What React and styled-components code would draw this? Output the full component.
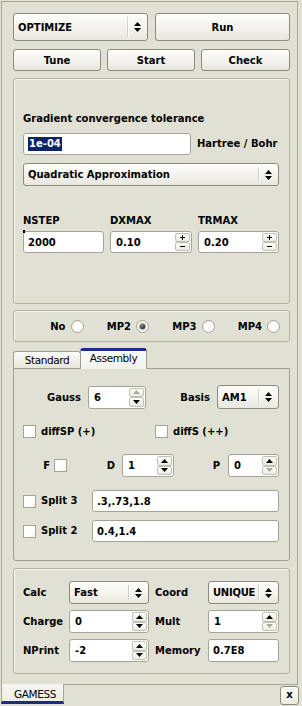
import React from 'react';
import styled, { createGlobalStyle } from 'styled-components';

const GlobalStyle = createGlobalStyle`
  html, body {
    margin: 0;
    padding: 0;
    background: #e1e0d4;
  }
  body {
    font-family: "DejaVu Sans", sans-serif;
    font-size: 10px;
    font-weight: bold;
    color: #000;
  }
`;

const Window = styled.div`
  width: 301px;
  height: 705px;
  margin: 1px 0 0 1px;
  display: flex;
  flex-direction: column;
`;

const Frame = styled.div`
  box-sizing: border-box;
  width: 297px;
  height: 683px;
  border: 1px solid #a9a697;
  border-bottom: none;
  padding: 11px 7px 0 11px;
  display: flex;
  flex-direction: column;
`;

const Row = styled.div`
  display: grid;
  grid-template-columns: ${p => p.$cols};
  column-gap: ${p => p.$gap || 0}px;
  margin-top: ${p => p.$mt || 0}px;
  height: ${p => p.$h}px;
  align-items: center;
`;

const Button = styled.div`
  box-sizing: border-box;
  height: 100%;
  border: 1px solid #8c8a7c;
  border-radius: 3px;
  background: linear-gradient(#fdfdfb, #f3f2ec 55%, #e7e5db);
  display: flex;
  align-items: center;
  justify-content: center;
`;

const Combo = styled.div`
  box-sizing: border-box;
  height: ${p => p.$h || 23}px;
  border: 1px solid #8c8a7c;
  border-radius: 3px;
  background: linear-gradient(#fdfdfb, #f3f2ec 55%, #e9e7de);
  display: flex;
  align-items: center;
  padding-left: 4px;
`;

const ComboText = styled.span`
  flex: 1;
  min-width: 0;
  white-space: nowrap;
  letter-spacing: ${p => p.$tight ? '-0.25px' : 'normal'};
`;

const ComboArrow = styled.span`
  flex: none;
  width: 19px;
  height: calc(100% - 6px);
  border-left: 1px solid #d2d0c4;
  box-shadow: inset 1px 0 0 #fff;
  display: flex;
  align-items: center;
  justify-content: center;
`;

const Group = styled.div`
  box-sizing: border-box;
  height: ${p => p.$h}px;
  margin-top: ${p => p.$mt}px;
  border: 1px solid #b3b0a2;
  border-radius: 3px;
  box-shadow: inset 1px 1px 0 #f4f3ee;
  padding: ${p => p.$pad};
  display: flex;
  flex-direction: column;
`;

const Label = styled.div`
  line-height: 12px;
  white-space: nowrap;
  margin-top: ${p => p.$mt || 0}px;
  padding-left: ${p => p.$pl || 0}px;
  width: ${p => (p.$w ? p.$w + 'px' : 'auto')};
  flex: none;
`;

const Field = styled.div`
  box-sizing: border-box;
  position: relative;
  height: ${p => p.$h || 22}px;
  width: ${p => (p.$w ? p.$w + 'px' : 'auto')};
  flex: ${p => (p.$w ? 'none' : '1')};
  border: 1px solid #a5a394;
  border-radius: 3px;
  background: #fff;
  display: flex;
  align-items: center;
  padding: 0 4px;
  white-space: nowrap;
`;

const Caret = styled.span`
  position: absolute;
  left: -1px;
  top: -2px;
  width: 2px;
  height: 3px;
  background: #000;
`;

const Selected = styled.span`
  background: #0a246a;
  color: #fff;
  line-height: 14px;
  padding: 0 1px;
`;

const Inline = styled.div`
  display: flex;
  align-items: center;
  gap: ${p => p.$gap || 6}px;
  margin-top: ${p => p.$mt || 0}px;
  justify-content: ${p => p.$justify || 'flex-start'};
`;

const Spin = styled.div`
  box-sizing: border-box;
  height: ${p => p.$h || 23}px;
  width: ${p => (p.$w ? p.$w + 'px' : 'auto')};
  border: 1px solid #a5a394;
  border-radius: 3px;
  background: #fff;
  display: flex;
  padding: 1px;
`;

const SpinText = styled.span`
  flex: 1;
  display: flex;
  align-items: center;
  padding-left: 4px;
`;

const SpinCol = styled.div`
  width: 15px;
  display: flex;
  flex-direction: column;
`;

const SpinHalf = styled.div`
  flex: 1;
  border: 1px solid #c2c0b3;
  border-radius: 2px;
  background: linear-gradient(#fefefd, #eceae2);
  display: flex;
  align-items: center;
  justify-content: center;
`;

const RadioItem = styled.div`
  display: flex;
  align-items: center;
  justify-content: flex-end;
  gap: 5px;
`;

const Radio = styled.span`
  box-sizing: border-box;
  width: 13px;
  height: 13px;
  border-radius: 50%;
  border: 1px solid #a5a394;
  background: radial-gradient(circle at 60% 65%, #fff 40%, #eeede6);
  display: flex;
  align-items: center;
  justify-content: center;

  &::after {
    content: '';
    display: ${p => (p.$on ? 'block' : 'none')};
    width: 5px;
    height: 5px;
    border-radius: 50%;
    background: radial-gradient(circle at 40% 35%, #8a8a8a, #2b2b2b 70%);
    box-shadow: 0 0 1px 1px #9c9c9c;
  }
`;

const Check = styled.span`
  box-sizing: border-box;
  flex: none;
  width: 13px;
  height: 13px;
  border: 1px solid #a5a394;
  background: linear-gradient(135deg, #fff 60%, #f2f1ec);
`;

const TabBar = styled.div`
  display: flex;
  align-items: flex-end;
  height: 20px;
  margin-top: 6px;
  position: relative;
  z-index: 1;
`;

const Tab = styled.div`
  box-sizing: border-box;
  width: ${p => p.$w}px;
  height: ${p => (p.$on ? 21 : 17)}px;
  margin-bottom: ${p => (p.$on ? -1 : 0)}px;
  margin-left: ${p => (p.$on ? -1 : 0)}px;
  border: 1px solid #a09e90;
  border-bottom: none;
  border-top: ${p => (p.$on ? '3px solid #1c2b8a' : '1px solid #a09e90')};
  border-radius: 3px 3px 0 0;
  background: ${p => (p.$on ? 'linear-gradient(#fbfbf9, #f3f2ed)' : 'linear-gradient(#fcfcfa, #e7e5da)')};
  font-weight: normal;
  font-size: 10.5px;
  letter-spacing: -0.4px;
  display: flex;
  justify-content: center;
  padding-top: ${p => (p.$on ? 1 : 2)}px;
  line-height: 12px;
`;

const TabPanel = styled.div`
  box-sizing: border-box;
  height: 193px;
  border: 1px solid #a09e90;
  border-radius: 0 0 3px 3px;
  padding: 16px 10px 0 9px;
  display: flex;
  flex-direction: column;
`;

const BottomBar = styled.div`
  display: flex;
  height: 21px;
`;

const DockTab = styled.div`
  box-sizing: border-box;
  width: 63px;
  height: 20px;
  border-left: 1px solid #a9a697;
  border-right: 1px solid #a9a697;
  border-bottom: 3px solid #1c2b8a;
  background: linear-gradient(#f7f6f2, #eeede6);
  font-weight: normal;
  font-size: 10.5px;
  letter-spacing: -0.4px;
  padding: 4px 0 0 12px;
  line-height: 12px;
`;

const DockRest = styled.div`
  box-sizing: border-box;
  width: 234px;
  border-top: 1px solid #a9a697;
  display: flex;
  justify-content: flex-end;
  padding-top: 1px;
`;

const CloseButton = styled.div`
  box-sizing: border-box;
  width: 19px;
  height: 19px;
  margin-right: -1px;
  border: 1px solid #8c8a7c;
  border-radius: 3px;
  background: linear-gradient(#fdfdfb, #eceae1);
  display: flex;
  align-items: center;
  justify-content: center;
  line-height: 10px;
  padding-bottom: 2px;
`;

const UpDown = () => (
  <svg width="7" height="12" viewBox="0 0 7 12">
    <polygon points="0,5 7,5 3.5,1" fill="#000" />
    <polygon points="0,7 7,7 3.5,11" fill="#000" />
  </svg>
);

const Tri = ({ down, dim }) => (
  <svg width="7" height="4" viewBox="0 0 7 4">
    <polygon points={down ? '0,0 7,0 3.5,4' : '0,4 7,4 3.5,0'} fill={dim ? '#aca899' : '#000'} />
  </svg>
);

const Sign = ({ plus }) => (
  <svg width="5" height="5" viewBox="0 0 5 5">
    <rect x="0" y="2" width="5" height="1" fill="#000" />
    {plus && <rect x="2" y="0" width="1" height="5" fill="#000" />}
  </svg>
);

const ComboBox = ({ text, h, tight }) => (
  <Combo $h={h}>
    <ComboText $tight={tight}>{text}</ComboText>
    <ComboArrow><UpDown /></ComboArrow>
  </Combo>
);

const ArrowSpin = ({ value, w, upDim, downDim }) => (
  <Spin $w={w}>
    <SpinText>{value}</SpinText>
    <SpinCol>
      <SpinHalf><Tri dim={upDim} /></SpinHalf>
      <SpinHalf><Tri down dim={downDim} /></SpinHalf>
    </SpinCol>
  </Spin>
);

const PlusSpin = ({ value }) => (
  <Spin $h={22}>
    <SpinText>{value}</SpinText>
    <SpinCol>
      <SpinHalf><Sign plus /></SpinHalf>
      <SpinHalf><Sign /></SpinHalf>
    </SpinCol>
  </Spin>
);

export default function App() {
  return (
    <Window>
      <GlobalStyle />
      <Frame>
        <Row $cols="135px 135px" $gap={7} $h={28}>
          <ComboBox text="OPTIMIZE" h={28} />
          <Button>Run</Button>
        </Row>
        <Row $cols="88px 88px 1fr" $gap={6} $h={22} $mt={8}>
          <Button>Tune</Button>
          <Button>Start</Button>
          <Button>Check</Button>
        </Row>

        <Group $h={226} $mt={7} $pad="34px 10px 0 9px">
          <Label>Gradient convergence tolerance</Label>
          <Inline $mt={8} $gap={6}>
            <Field $w={168}><Selected>1e-04</Selected></Field>
            <Label>Hartree / Bohr</Label>
          </Inline>
          <div style={{ marginTop: 8 }}>
            <ComboBox text="Quadratic Approximation" h={23} />
          </div>
          <Row $cols="81px 82px 81px" $gap={6} $h={12} $mt={29}>
            <Label>NSTEP</Label>
            <Label>DXMAX</Label>
            <Label>TRMAX</Label>
          </Row>
          <Row $cols="81px 82px 81px" $gap={6} $h={22} $mt={4}>
            <Field><Caret />2000</Field>
            <PlusSpin value="0.10" />
            <PlusSpin value="0.20" />
          </Row>
        </Group>

        <Group $h={32} $mt={6} $pad="0 9px 0 4px">
          <Row $cols="repeat(4, 1fr)" $h={30}>
            <RadioItem>No<Radio /></RadioItem>
            <RadioItem>MP2<Radio $on /></RadioItem>
            <RadioItem>MP3<Radio /></RadioItem>
            <RadioItem>MP4<Radio /></RadioItem>
          </Row>
        </Group>

        <TabBar>
          <Tab $w={68}>Standard</Tab>
          <Tab $w={67} $on>Assembly</Tab>
        </TabBar>
        <TabPanel>
          <Row $cols="123px 1fr" $h={23}>
            <Inline $justify="flex-end" $gap={7}>
              Gauss<ArrowSpin value="6" w={58} upDim />
            </Inline>
            <Inline $justify="flex-end" $gap={7}>
              Basis<div style={{ width: 62 }}><ComboBox text="AM1" h={24} /></div>
            </Inline>
          </Row>
          <Row $cols="132px 1fr" $h={13} $mt={17}>
            <Inline $gap={5}><Check />diffSP (+)</Inline>
            <Inline $gap={5}><Check />diffS (++)</Inline>
          </Row>
          <Row $cols="44px 107px 1fr" $h={23} $mt={16}>
            <Inline $justify="flex-end" $gap={4}>F<Check /></Inline>
            <Inline $justify="flex-end" $gap={7}>D<ArrowSpin value="1" w={52} /></Inline>
            <Inline $justify="flex-end" $gap={8}>P<ArrowSpin value="0" w={51} downDim /></Inline>
          </Row>
          <Inline $gap={5} $mt={13}>
            <Check />
            <Label $w={46}>Split 3</Label>
            <Field>.3,.73,1.8</Field>
          </Inline>
          <Inline $gap={5} $mt={8}>
            <Check />
            <Label $w={46}>Split 2</Label>
            <Field>0.4,1.4</Field>
          </Inline>
        </TabPanel>

        <Group $h={106} $mt={7} $pad="12px 10px 0 9px">
          <Row $cols="46px 80px 59px 71px" $h={23}>
            <Label>Calc</Label>
            <ComboBox text="Fast" h={23} />
            <Label $pl={6}>Coord</Label>
            <ComboBox text="UNIQUE" h={23} tight />
          </Row>
          <Row $cols="46px 80px 59px 71px" $h={23} $mt={6}>
            <Label>Charge</Label>
            <ArrowSpin value="0" />
            <Label $pl={6}>Mult</Label>
            <ArrowSpin value="1" downDim />
          </Row>
          <Row $cols="46px 80px 59px 71px" $h={23} $mt={6}>
            <Label>NPrint</Label>
            <ArrowSpin value="-2" />
            <Label $pl={6}>Memory</Label>
            <Field $h={23}>0.7E8</Field>
          </Row>
        </Group>
      </Frame>
      <BottomBar>
        <DockTab>GAMESS</DockTab>
        <DockRest>
          <CloseButton>x</CloseButton>
        </DockRest>
      </BottomBar>
    </Window>
  );
}
